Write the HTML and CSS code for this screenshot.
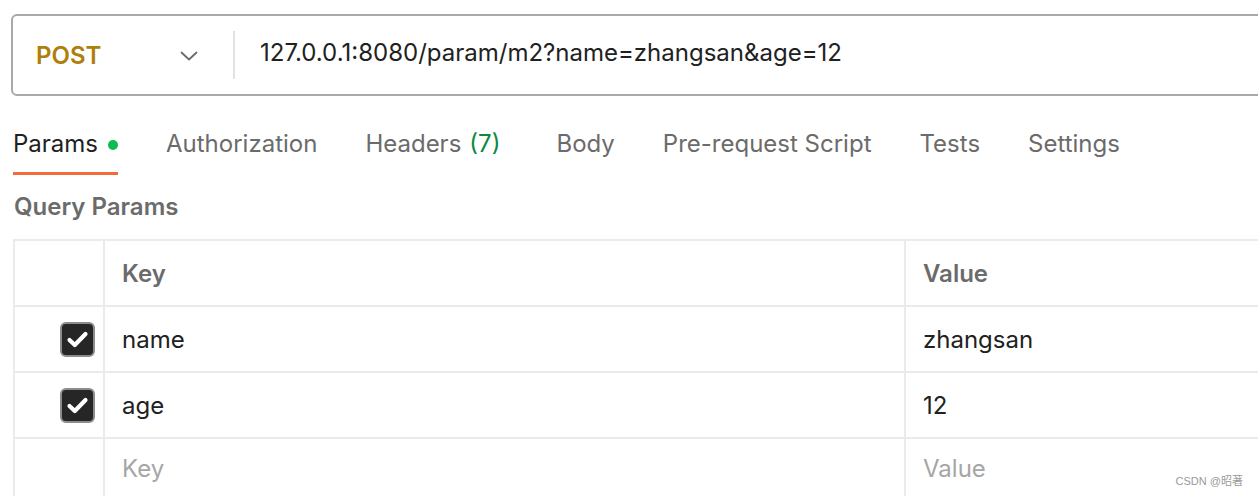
FILE: index.html
```html
<!DOCTYPE html>
<html>
<head>
<meta charset="utf-8">
<link rel="stylesheet" href="styles.css">
</head>
<body>
<div class="page">
  <div class="url-bar">
    <div class="method">
      <span class="method-name">POST</span>
      <svg class="chevron" width="18" height="10" viewBox="0 0 18 10"><path d="M1.5 1.5 L9 8.5 L16.5 1.5" fill="none" stroke="#6b6b6b" stroke-width="1.8" stroke-linecap="round" stroke-linejoin="round"/></svg>
    </div>
    <div class="divider"></div>
    <div class="url">127.0.0.1:8080/param/m2?name=zhangsan&amp;age=12</div>
  </div>

  <div class="tabs">
    <div class="tab active">Params <span class="dot"></span></div>
    <div class="tab">Authorization</div>
    <div class="tab tab-wide">Headers <span class="count">(7)</span></div>
    <div class="tab">Body</div>
    <div class="tab">Pre-request Script</div>
    <div class="tab">Tests</div>
    <div class="tab">Settings</div>
  </div>

  <div class="section-title">Query Params</div>

  <div class="table">
    <div class="cell"></div>
    <div class="cell head">Key</div>
    <div class="cell head">Value</div>

    <div class="cell check"><span class="checkbox"><svg width="31" height="31" viewBox="0 0 31 31"><path d="M7.5 16 L12.8 21 L23.5 10" fill="none" stroke="#fff" stroke-width="4.2" stroke-linecap="round" stroke-linejoin="round"/></svg></span></div>
    <div class="cell">name</div>
    <div class="cell">zhangsan</div>

    <div class="cell check"><span class="checkbox"><svg width="31" height="31" viewBox="0 0 31 31"><path d="M7.5 16 L12.8 21 L23.5 10" fill="none" stroke="#fff" stroke-width="4.2" stroke-linecap="round" stroke-linejoin="round"/></svg></span></div>
    <div class="cell">age</div>
    <div class="cell">12</div>

    <div class="cell"></div>
    <div class="cell placeholder">Key</div>
    <div class="cell placeholder">Value</div>
  </div>
</div>
<div class="watermark">CSDN @昭著</div>
</body>
</html>
```

FILE: styles.css
```css
html, body {
  margin: 0;
  padding: 0;
  background: #fff;
  overflow: hidden;
  width: 1258px;
  height: 496px;
}
body {
  font-family: Inter, "Noto Sans", "Noto Sans CJK SC", sans-serif;
  color: #212121;
  position: relative;
}
.page {
  padding-top: 14px;
  width: 1400px;
}
.url-bar {
  margin-left: 11px;
  height: 78px;
  border: 2px solid #a9a9a9;
  border-radius: 6px;
  display: flex;
  align-items: center;
}
.method {
  width: 220px;
  padding-left: 23px;
  box-sizing: border-box;
  display: flex;
  align-items: center;
}
.method-name {
  font-size: 24px;
  font-weight: 600;
  color: #ae8009;
  width: 144px;
}
.chevron {
  display: block;
  margin-top: 2px;
}
.divider {
  width: 2px;
  height: 48px;
  background: #e3e3e3;
}
.url {
  margin-left: 25px;
  font-size: 24px;
  color: #212121;
  margin-top: -6px;
}
.tabs {
  margin-top: 19px;
  margin-left: 13px;
  display: flex;
}
.tab {
  font-size: 24px;
  line-height: 30px;
  padding: 14px 0 13px;
  color: #6b6b6b;
  border-bottom: 3px solid transparent;
  display: flex;
  align-items: center;
  margin-right: 48px;
}
.tab.tab-wide {
  margin-right: 56px;
}
.tab.active {
  color: #212121;
  border-bottom-color: #f26b3a;
}
.dot {
  width: 10px;
  height: 10px;
  border-radius: 50%;
  background: #0cbb52;
  margin-left: 10px;
  margin-top: 2px;
}
.count {
  color: #0a8a3e;
  margin-left: 8px;
}
.section-title {
  margin-left: 14px;
  margin-top: 17px;
  font-size: 24px;
  line-height: 30px;
  font-weight: 600;
  color: #6b6b6b;
}
.table {
  margin-top: 17px;
  margin-left: 13px;
  display: grid;
  grid-template-columns: 90px 801px 1fr;
  grid-auto-rows: 66px;
  border-top: 2px solid #ebebeb;
  border-left: 2px solid #ebebeb;
}
.cell {
  border-right: 2px solid #ebebeb;
  border-bottom: 2px solid #ebebeb;
  display: flex;
  align-items: center;
  padding-left: 17px;
  font-size: 24px;
  color: #212121;
}
.cell.head {
  font-weight: 600;
  color: #6b6b6b;
}
.cell.placeholder {
  color: #a6a6a6;
  padding-bottom: 6px;
}
.cell.check {
  justify-content: flex-end;
  padding-right: 8px;
}
.checkbox {
  width: 31px;
  height: 31px;
  border: 2px solid #8c8c8c;
  border-radius: 6px;
  background: #262626;
  display: flex;
  align-items: center;
  justify-content: center;
}
.watermark {
  position: absolute;
  right: 15px;
  top: 472px;
  font-size: 11px;
  color: #9a9a9a;
  font-family: "Liberation Sans", "Noto Sans CJK SC", sans-serif;
}
```
